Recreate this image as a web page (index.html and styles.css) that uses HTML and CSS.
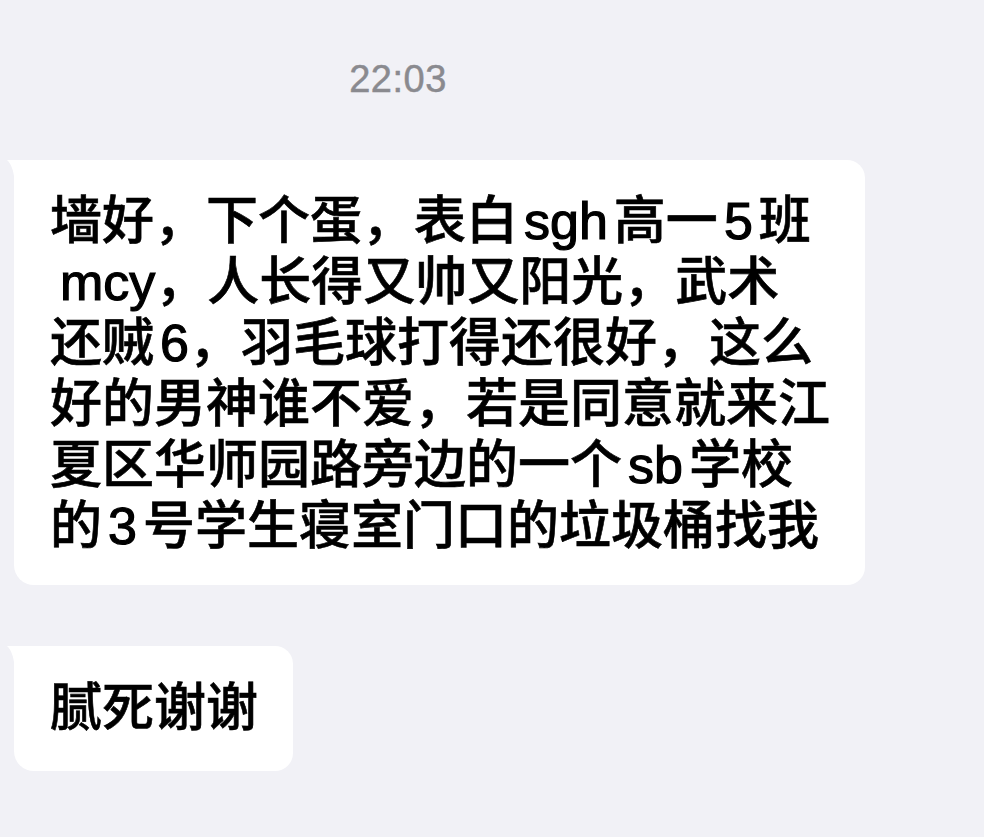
FILE: index.html
```html
<!DOCTYPE html>
<html lang="zh-CN">
<head>
<meta charset="utf-8">
<title>Chat</title>
<link rel="stylesheet" href="styles.css">
</head>
<body>
<div class="chat">
  <div class="time">22:03</div>
  <div class="row">
    <div class="bubble bubble-long">墙好，下个蛋，表白<span class="en">sgh</span>高一<span class="en">5</span>班<br><span class="en lead">mcy</span>，人长得又帅又阳光，武术<br>还贼<span class="en pre">6</span>，羽毛球打得还很好，这么<br>好的男神谁不爱，若是同意就来江<br>夏区华师园路旁边的一个<span class="en">sb</span>学校<br>的<span class="en">3</span>号学生寝室门口的垃圾桶找我</div>
  </div>
  <div class="row">
    <div class="bubble bubble-short">腻死谢谢</div>
  </div>
</div>
</body>
</html>
```

FILE: styles.css
```css
html, body {
  margin: 0;
  padding: 0;
  background: #f1f1f6;
}
body {
  width: 984px;
  height: 837px;
  overflow: hidden;
  font-family: "Liberation Sans", "Noto Sans CJK SC", sans-serif;
}
.chat {
  display: flex;
  flex-direction: column;
  align-items: flex-start;
  padding: 60px 0 0 14px;
  gap: 61px;
}
.time {
  width: 768px;
  text-align: center;
  font-size: 38px;
  line-height: 38px;
  color: #8a8a8f;
  font-weight: 400;
  letter-spacing: 0.5px;
  margin-bottom: 1px;
  -webkit-text-stroke: 0.5px #8a8a8f;
}
.row {
  display: flex;
}
.bubble {
  position: relative;
  background: #ffffff;
  border-radius: 0 18px 18px 20px;
  padding: 31px 35px 28px 36px;
  font-size: 52px;
  line-height: 61px;
  font-weight: 500;
  color: #000;
  -webkit-text-stroke: 0.6px #000;
}
.bubble-short {
  padding-top: 32px;
  padding-bottom: 32px;
}
.bubble::before {
  content: "";
  position: absolute;
  left: -7px;
  top: 0;
  width: 8px;
  height: 26px;
  background: #ffffff;
  clip-path: path('M0 0 L8 0 L8 26 Q7 6 0 0 Z');
}
.en {
  margin: 0 6px;
  -webkit-text-stroke: 1.2px #000;
}
.en.lead {
  margin: 0 0 0 10px;
}
.en.pre {
  margin-right: 0;
}
```
